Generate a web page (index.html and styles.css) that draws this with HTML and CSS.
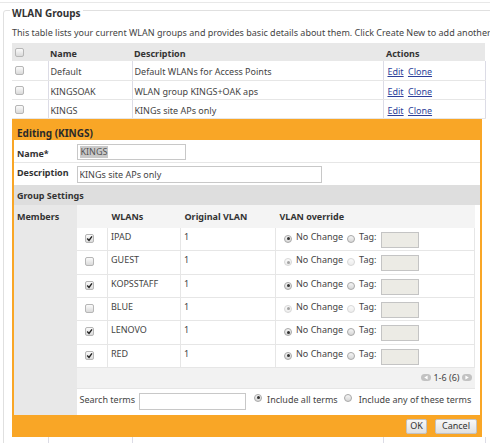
FILE: index.html
```html
<!DOCTYPE html>
<html lang="en">
<head>
  <meta charset="UTF-8" />
  <title>WLAN Groups</title>
  <link rel="stylesheet" href="styles.css">
</head>
<body>
  <div class="topline"></div>
  <fieldset class="groups">
    <legend>WLAN Groups</legend>
    <p class="intro">This table lists your current WLAN groups and provides basic details about them. Click Create New to add another WLAN group.</p>

    <table class="list">
      <thead>
        <tr>
          <th class="c-cb"><span class="cb"></span></th>
          <th class="c-name">Name</th>
          <th class="c-desc">Description</th>
          <th class="c-act">Actions</th>
        </tr>
      </thead>
      <tbody>
        <tr>
          <td class="c-cb"><span class="cb"></span></td>
          <td>Default</td>
          <td>Default WLANs for Access Points</td>
          <td class="c-act"><a href="#">Edit</a> <a href="#">Clone</a></td>
        </tr>
        <tr>
          <td class="c-cb"><span class="cb"></span></td>
          <td>KINGSOAK</td>
          <td>WLAN group KINGS+OAK aps</td>
          <td class="c-act"><a href="#">Edit</a> <a href="#">Clone</a></td>
        </tr>
        <tr>
          <td class="c-cb"><span class="cb"></span></td>
          <td>KINGS</td>
          <td>KINGs site APs only</td>
          <td class="c-act"><a href="#">Edit</a> <a href="#">Clone</a></td>
        </tr>
        <tr class="edit-row">
          <td colspan="4">
            <div class="editor">
              <div class="editor-title">Editing (KINGS)</div>
              <table class="form">
                <tr class="r-name">
                  <th>Name*</th>
                  <td><div class="field name-field"><span class="sel">KINGS</span></div></td>
                </tr>
                <tr class="r-desc">
                  <th>Description</th>
                  <td><input class="field desc-field" type="text" value="KINGs site APs only"></td>
                </tr>
                <tr class="r-sect">
                  <th colspan="2">Group Settings</th>
                </tr>
                <tr class="r-members">
                  <th>Members</th>
                  <td>
                    <table class="wlans">
                      <thead>
                        <tr>
                          <th class="w-cb"></th>
                          <th class="w-name">WLANs</th>
                          <th class="w-vlan">Original VLAN</th>
                          <th class="w-ovr">VLAN override</th>
                        </tr>
                      </thead>
                      <tbody>
                        <tr>
                          <td class="w-cb"><span class="cb on"><svg viewBox="0 0 7 7"><path d="M1.2 3.6 L3 5.4 L6 1.3"/></svg></span></td>
                          <td>IPAD</td>
                          <td>1</td>
                          <td class="w-ovr"><div class="override"><span class="rd on"></span><span class="lbl">No Change</span><span class="rd"></span><span class="lbl">Tag:</span><input class="tag" type="text" disabled></div></td>
                        </tr>
                        <tr class="inactive">
                          <td class="w-cb"><span class="cb"></span></td>
                          <td>GUEST</td>
                          <td>1</td>
                          <td class="w-ovr"><div class="override"><span class="rd on"></span><span class="lbl">No Change</span><span class="rd"></span><span class="lbl">Tag:</span><input class="tag" type="text" disabled></div></td>
                        </tr>
                        <tr>
                          <td class="w-cb"><span class="cb on"><svg viewBox="0 0 7 7"><path d="M1.2 3.6 L3 5.4 L6 1.3"/></svg></span></td>
                          <td>KOPSSTAFF</td>
                          <td>1</td>
                          <td class="w-ovr"><div class="override"><span class="rd on"></span><span class="lbl">No Change</span><span class="rd"></span><span class="lbl">Tag:</span><input class="tag" type="text" disabled></div></td>
                        </tr>
                        <tr class="inactive">
                          <td class="w-cb"><span class="cb"></span></td>
                          <td>BLUE</td>
                          <td>1</td>
                          <td class="w-ovr"><div class="override"><span class="rd on"></span><span class="lbl">No Change</span><span class="rd"></span><span class="lbl">Tag:</span><input class="tag" type="text" disabled></div></td>
                        </tr>
                        <tr>
                          <td class="w-cb"><span class="cb on"><svg viewBox="0 0 7 7"><path d="M1.2 3.6 L3 5.4 L6 1.3"/></svg></span></td>
                          <td>LENOVO</td>
                          <td>1</td>
                          <td class="w-ovr"><div class="override"><span class="rd on"></span><span class="lbl">No Change</span><span class="rd"></span><span class="lbl">Tag:</span><input class="tag" type="text" disabled></div></td>
                        </tr>
                        <tr>
                          <td class="w-cb"><span class="cb on"><svg viewBox="0 0 7 7"><path d="M1.2 3.6 L3 5.4 L6 1.3"/></svg></span></td>
                          <td>RED</td>
                          <td>1</td>
                          <td class="w-ovr"><div class="override"><span class="rd on"></span><span class="lbl">No Change</span><span class="rd"></span><span class="lbl">Tag:</span><input class="tag" type="text" disabled></div></td>
                        </tr>
                      </tbody>
                    </table>

                    <div class="pager">
                      <svg class="arrow" viewBox="0 0 10 7"><rect width="10" height="7" rx="3.5"/><path d="M6.6 1.4 L3.2 3.5 L6.6 5.6 Z"/></svg>
                      <span>1-6 (6)</span>
                      <svg class="arrow" viewBox="0 0 10 7"><rect width="10" height="7" rx="3.5"/><path d="M3.4 1.4 L6.8 3.5 L3.4 5.6 Z"/></svg>
                    </div>

                    <div class="search">
                      <span class="lbl">Search terms</span>
                      <input class="field search-field" type="text">
                      <span class="rd on"></span><span class="lbl">Include all terms</span>
                      <span class="rd"></span><span class="lbl">Include any of these terms</span>
                    </div>
                  </td>
                </tr>
              </table>
              <div class="editor-foot">
                <button class="btn-ok">OK</button>
                <button class="btn-cancel">Cancel</button>
              </div>
            </div>
          </td>
        </tr>
        <tr class="blank">
          <td class="c-cb"></td>
          <td></td>
          <td></td>
          <td class="c-act"></td>
        </tr>
      </tbody>
    </table>
  </fieldset>
</body>
</html>
```

FILE: styles.css
```css
* {
  box-sizing: border-box;
}
body {
  margin: 0;
  font-family: "Noto Sans", "Liberation Sans", sans-serif;
  font-size: 9px;
  line-height: 12px;
  color: #444;
  background: #fff;
  overflow: hidden;
}
.topline {
  height: 3px;
  border-bottom: 1px solid #e8e8e8;
}
.groups {
  margin: -2px 0 0 3px;
  padding: 0 0 0 8px;
  width: 640px;
  border: 1px solid #e0e0e0;
  border-radius: 3px;
}
.groups legend {
  font-size: 10px;
  font-weight: bold;
  line-height: 14px;
  padding: 5px 2px 0;
  margin-left: -2px;
  color: #333;
}
.intro {
  margin: 6px 0 3px;
  line-height: 14px;
  white-space: nowrap;
}

/* group list */
.list {
  border-collapse: collapse;
  table-layout: fixed;
  width: 473px;
}
.list .c-cb { width: 36px; }
.list .c-name { width: 84px; }
.list .c-desc { width: 251px; }
.list .c-act { width: 102px; }
.list > thead > tr {
  height: 18px;
}
.list > thead > tr > th {
  background: #e8e8e8;
  color: #333;
  font-weight: bold;
  text-align: left;
  vertical-align: top;
  padding: 5px 2px 0;
}
.list > tbody > tr {
  height: 19px;
}
.list > tbody > tr > td {
  vertical-align: top;
  padding: 5px 2px 0;
  border-bottom: 1px solid #e6e6e6;
  border-left: 1px solid #dcdce6;
}
.list > tbody > tr > td.c-cb {
  border-left: none;
}
.list > tbody > tr > td.c-act {
  border-right: 1px solid #dcdce6;
  padding-left: 4px;
}
.list > thead > tr > th.c-act {
  padding-left: 3px;
}
.list > thead > tr > .c-cb,
.list > tbody > tr > .c-cb {
  padding-left: 3px;
}
.list .cb {
  vertical-align: top;
}
.list > tbody > tr.blank {
  height: 20px;
}
.list a {
  color: #2d3f9a;
  margin-right: 2px;
}
.list > tbody > tr.edit-row > td {
  padding: 0;
  border: none;
}

/* checkbox + radio */
.cb {
  display: inline-block;
  width: 9px;
  height: 9px;
  border: 1px solid #b6b6b6;
  border-radius: 2px;
  background: linear-gradient(#fbfbfb, #dadada);
}
.cb svg {
  display: block;
  width: 7px;
  height: 7px;
}
.cb svg path {
  fill: none;
  stroke: #222;
  stroke-width: 1.4;
}
.rd {
  display: inline-block;
  flex: none;
  width: 8px;
  height: 8px;
  border: 1px solid #a9a9a9;
  border-radius: 50%;
  background: linear-gradient(#f6f6f6, #d6d6d6);
  position: relative;
}
.rd.on::after {
  content: "";
  position: absolute;
  left: 1.5px;
  top: 1.5px;
  width: 3px;
  height: 3px;
  border-radius: 50%;
  background: #333;
}

/* editor panel */
.editor {
  width: 470px;
  background: #f9a626;
  padding: 0 2px;
}
.editor-title {
  height: 21px;
  padding: 7px 0 0 3px;
  line-height: 14px;
  font-size: 10px;
  font-weight: bold;
  color: #2a2a2a;
}
.form {
  width: 466px;
  border-collapse: collapse;
  background: #fff;
}
.form > tbody > tr > th {
  width: 63px;
  text-align: left;
  vertical-align: top;
  font-weight: bold;
  color: #333;
  padding: 0 0 0 3px;
}
.form > tbody > tr > td {
  vertical-align: top;
  padding: 0;
}
.form .r-name {
  height: 23px;
}
.form .r-name > th { padding-top: 8px; }
.form .r-name > td { padding-top: 4px; }
.form .r-name > th,
.form .r-name > td {
  border-bottom: 1px solid #e6e6e6;
}
.form .r-desc {
  height: 22px;
}
.form .r-desc > th { padding-top: 4px; }
.form .r-desc > td { padding-top: 3px; }
.form .r-sect {
  height: 20px;
}
.form .r-sect > th {
  background: #dedede;
  padding-top: 5px;
}
.form .r-members > th {
  background: #e8e8e8;
  padding-top: 6px;
}
.form .r-members > td {
  padding-right: 5px;
}

.field {
  display: block;
  height: 16px;
  border: 1px solid #c8c8c8;
  background: #fff;
  font: inherit;
  color: #444;
  padding: 0 2px;
  margin: 0;
}
.name-field {
  width: 109px;
  padding-top: 1px;
}
.name-field .sel {
  display: inline-block;
  background: #c9c9c9;
  color: #555;
  padding: 0 1px;
}
.desc-field {
  width: 245px;
  height: 17px;
}

/* members table */
.wlans {
  width: 398px;
  table-layout: fixed;
  border-collapse: collapse;
}
.wlans .w-cb { width: 31px; }
.wlans .w-name { width: 73px; }
.wlans .w-vlan { width: 95px; }
.wlans .w-ovr { width: 199px; }
.wlans thead tr {
  height: 23px;
}
.wlans th {
  background: #f4f4f4;
  text-align: left;
  vertical-align: top;
  padding: 6px 0 0 4px;
  font-weight: bold;
  color: #333;
}
.wlans tbody tr {
  height: 23.33px;
}
.wlans td {
  vertical-align: top;
  padding: 3px 0 0 3px;
  border-bottom: 1px solid #e6e6e6;
  border-left: 1px solid #e6e6e6;
}
.wlans td.w-ovr {
  border-right: 1px solid #e6e6e6;
  padding: 4px 0 0 8px;
}
.wlans td.w-cb {
  border-left: none;
  padding: 6px 0 0 8px;
}
.wlans .cb {
  vertical-align: top;
}
.override {
  display: flex;
  align-items: flex-start;
  height: 16px;
}
.override .rd {
  margin-top: 3px;
}
.override .lbl {
  margin-top: -1px;
  margin-left: 4px;
  margin-right: 4px;
}
.inactive .rd {
  opacity: 0.45;
}
.tag {
  width: 38px;
  height: 16px;
  margin: 0 0 0 1px;
  border: 1px solid #c4c4c4;
  background: #ecebe5;
  padding: 0;
}

.pager {
  height: 20px;
  width: 398px;
  background: #f2f2f2;
  display: flex;
  justify-content: flex-end;
  align-items: center;
  gap: 2px;
  padding-right: 3px;
}
.pager .arrow {
  width: 10px;
  height: 7px;
}
.pager .arrow rect {
  fill: #c2c2c2;
}
.pager .arrow path {
  fill: #fff;
}

.search {
  height: 27px;
  width: 398px;
  border-top: 1px solid #e6e6e6;
  display: flex;
  align-items: flex-start;
  padding: 4px 0 0 3px;
}
.search .lbl {
  margin-top: 1px;
}
.search-field {
  width: 107px;
  height: 17px;
  margin-left: 4px;
}
.search .rd {
  margin: 1px 5px 0 8px;
}
.search .rd + .lbl + .rd {
  margin-left: 6px;
  margin-right: 7px;
}

/* footer buttons */
.editor-foot {
  height: 22px;
  display: flex;
  justify-content: flex-end;
  gap: 8px;
  padding: 4px 3px 0 0;
}
.editor-foot button {
  height: 15px;
  padding: 0;
  font: inherit;
  color: #333;
  background: linear-gradient(#f8f8f8, #e0e0e0);
  border: 1px solid #c2c2c2;
  border-radius: 2px;
}
.btn-ok { width: 21px; }
.btn-cancel { width: 42px; }
```
